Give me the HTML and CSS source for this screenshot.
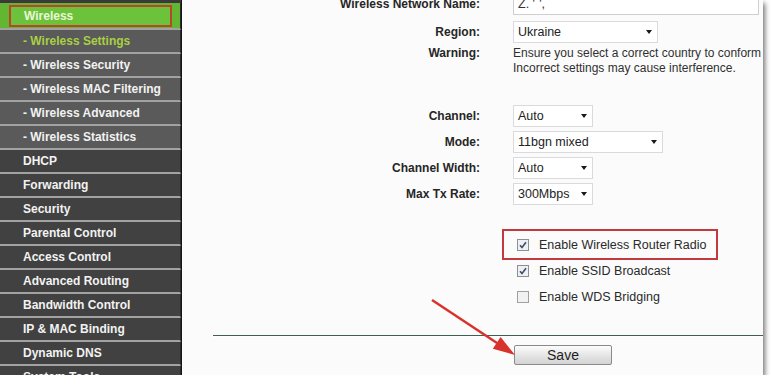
FILE: index.html
```html
<!DOCTYPE html>
<html>
<head>
  <meta charset="utf-8">
  <title>Wireless Settings</title>
  <link rel="stylesheet" href="styles.css">
</head>
<body>
  <div class="shot">
    <div class="menu">
      <div class="item active"><span class="mark">Wireless</span></div>
      <div class="item sub current">- Wireless Settings</div>
      <div class="item sub">- Wireless Security</div>
      <div class="item sub">- Wireless MAC Filtering</div>
      <div class="item sub">- Wireless Advanced</div>
      <div class="item sub">- Wireless Statistics</div>
      <div class="item">DHCP</div>
      <div class="item">Forwarding</div>
      <div class="item">Security</div>
      <div class="item">Parental Control</div>
      <div class="item">Access Control</div>
      <div class="item">Advanced Routing</div>
      <div class="item">Bandwidth Control</div>
      <div class="item">IP &amp; MAC Binding</div>
      <div class="item">Dynamic DNS</div>
      <div class="item">System Tools</div>
    </div>

    <div class="content">
      <div class="form">
        <div class="label">Wireless Network Name:</div>
        <div class="field"><div class="textbox">Z. '˜',</div></div>

        <div class="label">Region:</div>
        <div class="field"><div class="select w-region">Ukraine<span class="caret"></span></div></div>

        <div class="label warn-label">Warning:</div>
        <div class="field warn">Ensure you select a correct country to conform local law.<br>Incorrect settings may cause interference.</div>
      </div>

      <div class="form radio">
        <div class="label">Channel:</div>
        <div class="field"><div class="select w-short">Auto<span class="caret"></span></div></div>

        <div class="label">Mode:</div>
        <div class="field"><div class="select w-mode">11bgn mixed<span class="caret"></span></div></div>

        <div class="label">Channel Width:</div>
        <div class="field"><div class="select w-short">Auto<span class="caret"></span></div></div>

        <div class="label">Max Tx Rate:</div>
        <div class="field"><div class="select w-short">300Mbps<span class="caret"></span></div></div>
      </div>

      <div class="checks">
        <div class="check boxed">
          <svg class="cb" width="12" height="12" viewBox="0 0 12 12"><rect x="0.5" y="0.5" width="11" height="11" fill="#eef0f3" stroke="#8e8f8f"/><path d="M3 6.2 L5 8.5 L9 3.3" fill="none" stroke="#3d4d6a" stroke-width="1.6"/></svg>
          <span>Enable Wireless Router Radio</span>
        </div>
        <div class="check">
          <svg class="cb" width="12" height="12" viewBox="0 0 12 12"><rect x="0.5" y="0.5" width="11" height="11" fill="#eef0f3" stroke="#8e8f8f"/><path d="M3 6.2 L5 8.5 L9 3.3" fill="none" stroke="#3d4d6a" stroke-width="1.6"/></svg>
          <span>Enable SSID Broadcast</span>
        </div>
        <div class="check">
          <svg class="cb" width="12" height="12" viewBox="0 0 12 12"><rect x="0.5" y="0.5" width="11" height="11" fill="#f1f1f1" stroke="#a0a0a0"/></svg>
          <span>Enable WDS Bridging</span>
        </div>
      </div>

      <div class="rule"></div>
      <div class="actions"><button class="save">Save</button></div>

      <svg class="arrow" width="581" height="375" viewBox="0 0 581 375">
        <line x1="250" y1="300" x2="315" y2="343" stroke="#d8322c" stroke-width="2.5"/>
        <polygon points="333,355 318.6,337.1 310.8,348.7" fill="#d8322c"/>
      </svg>
    </div>
  </div>
</body>
</html>
```

FILE: styles.css
```css
html, body {
  margin: 0;
  padding: 0;
  background-color: #fff;
  font-family: "Liberation Sans", Arial, sans-serif;
  color: #222;
}
.shot {
  display: flex;
  width: 763px;
  height: 375px;
  overflow: hidden;
  background-color: #fbfbfb;
  box-shadow: 2px 3px 5px rgba(0, 0, 0, 0.55);
}

/* left menu */
.menu {
  width: 181px;
  flex-shrink: 0;
  padding-top: 3px;
  background-color: #3a3a3a;
  border-right: 1px solid #151515;
}
.item {
  height: 22px;
  line-height: 22px;
  padding-left: 23px;
  border-bottom: 2px solid #a2a2a2;
  border-right: 1px solid #2a2a2a;
  background-color: #414141;
  color: #f2f2f2;
  font-size: 12px;
  font-weight: bold;
  white-space: nowrap;
}
.item.sub {
  background-color: #5a5a5a;
}
.item.current {
  color: #a9cf45;
}
.item.active {
  height: 22px;
  padding: 2px 8px 1px 9px;
  background-color: #64b532;
}
.mark {
  display: block;
  height: 18px;
  line-height: 18px;
  padding-left: 13px;
  border: 2px solid #b8452c;
  background-color: #6cc23a;
  color: #eaf6d8;
}

/* content */
.content {
  position: relative;
  flex: 1;
  overflow: hidden;
}
.form {
  display: grid;
  grid-template-columns: 298px 1fr;
  column-gap: 33px;
  row-gap: 4px;
  align-items: center;
  font-size: 12px;
}
.form:first-child {
  margin-top: -7px;
  row-gap: 6px;
}
.form.radio {
  margin-top: 29px;
}
.label {
  text-align: right;
  font-weight: bold;
  color: #262626;
}
.warn-label {
  align-self: start;
  line-height: 15px;
}
.field.warn {
  margin-top: -3px;
  line-height: 15px;
  color: #303030;
  white-space: nowrap;
}
.form .label.warn-label {
  margin-top: -3px;
}
.textbox {
  width: 240px;
  height: 20px;
  line-height: 20px;
  padding-left: 4px;
  border: 1px solid #cfcfcf;
  background-color: #fff;
  font-size: 12.5px;
  color: #333;
}
.select {
  display: flex;
  align-items: center;
  justify-content: space-between;
  height: 20px;
  padding: 0 5px 0 4px;
  border: 1px solid #dadada;
  background-color: #fff;
  font-size: 12.5px;
  color: #222;
}
.w-region { width: 134px; }
.w-short { width: 69px; }
.w-mode { width: 139px; }
.caret {
  width: 0;
  height: 0;
  border-left: 3.5px solid transparent;
  border-right: 3.5px solid transparent;
  border-top: 4px solid #1a1a1a;
}

/* checkboxes */
.checks {
  margin: 24px 0 0 320px;
  font-size: 12.5px;
  color: #2a2a2a;
}
.check {
  display: flex;
  align-items: center;
  gap: 10px;
  height: 26px;
  padding-left: 15px;
}
.check.boxed {
  width: 199px;
  height: 27px;
  margin-bottom: -2px;
  padding-left: 13px;
  border: 2px solid #c23a40;
}
.cb {
  flex-shrink: 0;
}

.rule {
  margin: 25px 0 0 31px;
  height: 1px;
  background-color: #3e5f52;
  border-bottom: 1px solid #fff;
}
.actions {
  padding: 8px 0 0 332px;
}
.save {
  display: block;
  width: 98px;
  height: 20px;
  padding: 0;
  border: 1px solid #8a8a8a;
  border-radius: 2px;
  background: linear-gradient(#fdfdfd, #e4e4e4 55%, #d3d3d3);
  font-family: "Liberation Sans", Arial, sans-serif;
  font-size: 14px;
  color: #1e1e1e;
}
.arrow {
  position: absolute;
  left: 0;
  top: 0;
  pointer-events: none;
}
```
